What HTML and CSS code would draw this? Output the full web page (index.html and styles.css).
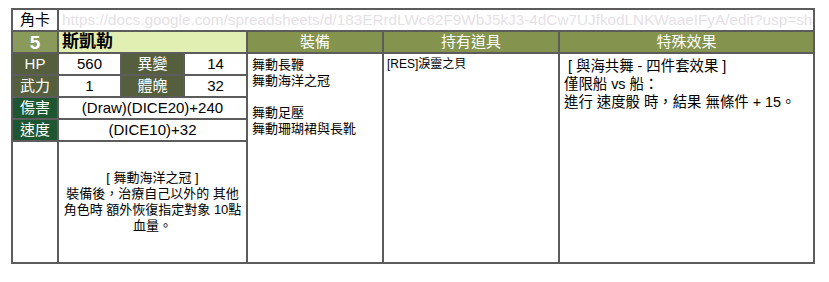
FILE: index.html
```html
<!DOCTYPE html>
<html lang="zh-Hant">
<head>
<meta charset="utf-8">
<title>角卡</title>
<link rel="stylesheet" href="styles.css">
</head>
<body>
<div class="sheet">
  <div class="cell label-plain">角卡</div>
  <div class="cell url">https://docs.google.com/spreadsheets/d/183ERrdLWc62F9WbJ5kJ3-4dCw7UJfkodLNKWaaeIFyA/edit?usp=sharing</div>

  <div class="cell num">5</div>
  <div class="cell name">斯凱勒</div>
  <div class="cell head">裝備</div>
  <div class="cell head">持有道具</div>
  <div class="cell head">特殊效果</div>

  <div class="cell stat">HP</div>
  <div class="cell val">560</div>
  <div class="cell stat">異變</div>
  <div class="cell val">14</div>
  <div class="cell equip">舞動長鞭<br>舞動海洋之冠<br><br>舞動足壓<br>舞動珊瑚裙與長靴</div>
  <div class="cell items">[RES]淚靈之貝</div>
  <div class="cell effect">&nbsp;[ 與海共舞 - 四件套效果 ]<br>僅限船 vs 船：<br>進行 速度骰 時，結果 無條件 + 15。</div>

  <div class="cell stat">武力</div>
  <div class="cell val">1</div>
  <div class="cell stat">體魄</div>
  <div class="cell val">32</div>

  <div class="cell stat2">傷害</div>
  <div class="cell val wide">(Draw)(DICE20)+240</div>

  <div class="cell stat2">速度</div>
  <div class="cell val wide">(DICE10)+32</div>

  <div class="cell blank"></div>
  <div class="cell desc wide">[ 舞動海洋之冠 ]<br>裝備後，治療自己以外的 其他<br>角色時 額外恢復指定對象 10點<br>血量。</div>
</div>
</body>
</html>
```

FILE: styles.css
```css
html, body {
  margin: 0;
  padding: 0;
  background: #ffffff;
}
body {
  padding: 8px 0 0 11px;
  font-family: "Liberation Sans", "Noto Sans CJK TC", sans-serif;
}
.sheet {
  display: grid;
  grid-template-columns: 44px 61px 61px 61px 134px 174px 253px;
  grid-template-rows: 20px 20px 20px 20px 20px 20px 120px;
  gap: 2px;
  padding: 2px;
  width: 800px;
  background: #5c5c5c;
}
.cell {
  background: #ffffff;
  color: #000;
  overflow: hidden;
  white-space: nowrap;
}
.label-plain {
  font-size: 15px;
  line-height: 20px;
  text-align: center;
}
.url {
  grid-column: 2 / 8;
  font-size: 15.3px;
  line-height: 20px;
  color: #e6dfe6;
  padding-left: 3px;
}
.num {
  background: #8a9a5b;
  color: #ffffff;
  font-weight: bold;
  font-size: 19px;
  line-height: 21px;
  text-align: center;
}
.name {
  grid-column: 2 / 5;
  background: #e2efb3;
  font-weight: bold;
  font-size: 17px;
  line-height: 20px;
  padding-left: 3px;
}
.head {
  background: #84944f;
  color: #ffffff;
  font-size: 15px;
  line-height: 20px;
  text-align: center;
}
.stat {
  background: #555f3d;
  color: #ffffff;
  font-size: 15px;
  line-height: 20px;
  text-align: center;
}
.stat2 {
  background: #1f5632;
  color: #ffffff;
  font-size: 15px;
  line-height: 20px;
  text-align: center;
}
.val {
  font-size: 15px;
  line-height: 20px;
  text-align: center;
}
.wide {
  grid-column: 2 / 5;
}
.equip {
  grid-column: 5;
  grid-row: 3 / 8;
  font-size: 13px;
  line-height: 16px;
  padding: 3px 0 0 4px;
}
.items {
  grid-column: 6;
  grid-row: 3 / 8;
  font-size: 12px;
  line-height: 16px;
  padding: 2px 0 0 3px;
}
.effect {
  grid-column: 7;
  grid-row: 3 / 8;
  font-size: 14.4px;
  line-height: 18px;
  padding: 3px 0 0 4px;
  white-space: normal;
}
.desc {
  display: flex;
  align-items: center;
  justify-content: center;
  text-align: center;
  font-size: 13px;
  line-height: 16px;
  white-space: normal;
}
```
